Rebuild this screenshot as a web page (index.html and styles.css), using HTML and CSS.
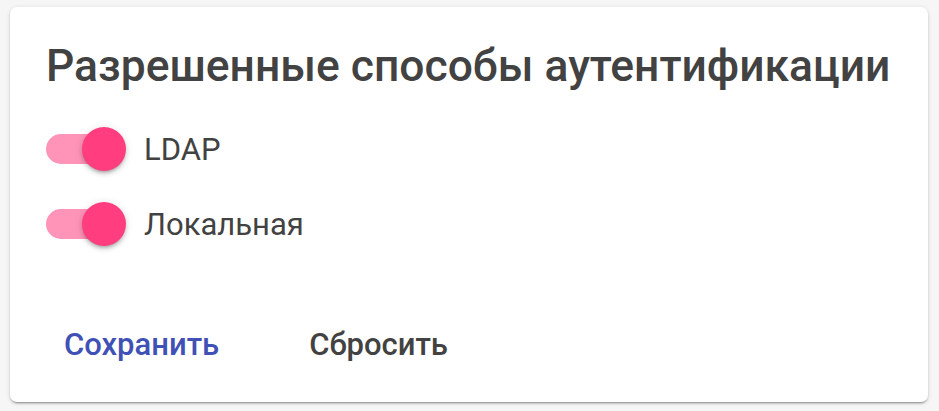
FILE: index.html
```html
<!DOCTYPE html>
<html lang="ru">
<head>
<meta charset="utf-8">
<link rel="stylesheet" href="styles.css">
</head>
<body>
<div class="card">
  <h1 class="title">Разрешенные способы аутентификации</h1>
  <div class="options">
    <label class="switch-row">
      <span class="switch"><span class="track"></span><span class="thumb"></span></span>
      <span class="label">LDAP</span>
    </label>
    <label class="switch-row">
      <span class="switch"><span class="track"></span><span class="thumb"></span></span>
      <span class="label">Локальная</span>
    </label>
  </div>
  <div class="actions">
    <button class="btn btn-primary">Сохранить</button>
    <button class="btn">Сбросить</button>
  </div>
</div>
</body>
</html>
```
FILE: styles.css
```css
html, body {
  margin: 0;
  padding: 0;
  background: #f6f6f6;
  font-family: Roboto, "Noto Sans", sans-serif;
}
body {
  padding: 7px 11px 9px 10px;
}
.card {
  height: 395px;
  box-sizing: border-box;
  background: #fff;
  border-radius: 7px;
  box-shadow: 0 3px 1px -2px rgba(0,0,0,.2), 0 2px 2px 0 rgba(0,0,0,.14), 0 1px 5px 0 rgba(0,0,0,.12);
  padding: 0 36px;
  display: flex;
  flex-direction: column;
}
.title {
  margin: 0;
  padding-top: 31px;
  font-size: 44.4px;
  line-height: 56px;
  font-weight: 500;
  color: #424242;
  white-space: nowrap;
}
.options {
  display: flex;
  flex-direction: column;
  gap: 31px;
  margin-top: 33px;
}
.switch-row {
  display: flex;
  align-items: center;
  gap: 18px;
  height: 44px;
}
.switch {
  position: relative;
  width: 80px;
  height: 44px;
  flex: none;
}
.track {
  position: absolute;
  left: 0;
  top: 7px;
  width: 74px;
  height: 30px;
  border-radius: 15px;
  background: #ff94b8;
}
.thumb {
  position: absolute;
  left: 36px;
  top: 0;
  width: 44px;
  height: 44px;
  border-radius: 50%;
  background: #ff3d7f;
  box-shadow: 0 3px 3px -2px rgba(0,0,0,.2), 0 3px 4px 0 rgba(0,0,0,.14), 0 1px 8px 0 rgba(0,0,0,.12);
}
.label {
  font-size: 31px;
  color: #424242;
}
.actions {
  display: flex;
  margin-top: auto;
  margin-bottom: 37px;
  gap: 90px;
  padding-left: 18px;
}
.btn {
  border: 0;
  background: none;
  padding: 0;
  font-family: Roboto, "Noto Sans", sans-serif;
  font-size: 31px;
  font-weight: 500;
  color: #424242;
  line-height: 40px;
}
.btn-primary {
  color: #3f51b5;
}
```
